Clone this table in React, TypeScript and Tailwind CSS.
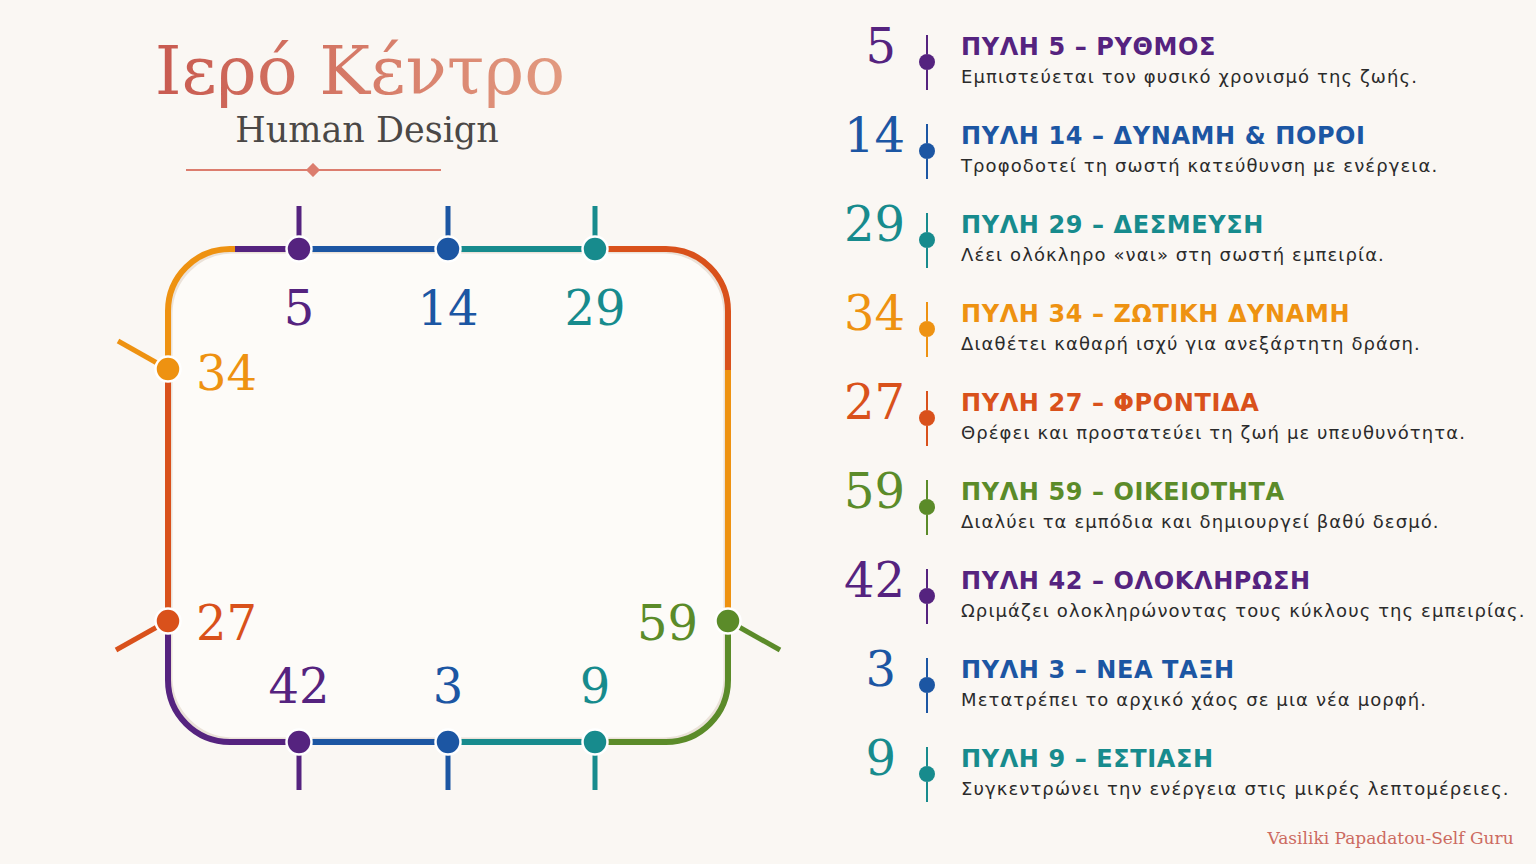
import React from 'react'

const C = {
  purple: '#55237f',
  blue: '#1c56a3',
  teal: '#178b8d',
  orange: '#ee9211',
  red: '#d9511b',
  green: '#5b8b29',
}

const GATES = [
  { n: '5', color: C.purple, title: 'ΠΥΛΗ 5 – ΡΥΘΜΟΣ', text: 'Εμπιστεύεται τον φυσικό χρονισμό της ζωής.' },
  { n: '14', color: C.blue, title: 'ΠΥΛΗ 14 – ΔΥΝΑΜΗ & ΠΟΡΟΙ', text: 'Τροφοδοτεί τη σωστή κατεύθυνση με ενέργεια.' },
  { n: '29', color: C.teal, title: 'ΠΥΛΗ 29 – ΔΕΣΜΕΥΣΗ', text: 'Λέει ολόκληρο «ναι» στη σωστή εμπειρία.' },
  { n: '34', color: C.orange, title: 'ΠΥΛΗ 34 – ΖΩΤΙΚΗ ΔΥΝΑΜΗ', text: 'Διαθέτει καθαρή ισχύ για ανεξάρτητη δράση.' },
  { n: '27', color: C.red, title: 'ΠΥΛΗ 27 – ΦΡΟΝΤΙΔΑ', text: 'Θρέφει και προστατεύει τη ζωή με υπευθυνότητα.' },
  { n: '59', color: C.green, title: 'ΠΥΛΗ 59 – ΟΙΚΕΙΟΤΗΤΑ', text: 'Διαλύει τα εμπόδια και δημιουργεί βαθύ δεσμό.' },
  { n: '42', color: C.purple, title: 'ΠΥΛΗ 42 – ΟΛΟΚΛΗΡΩΣΗ', text: 'Ωριμάζει ολοκληρώνοντας τους κύκλους της εμπειρίας.' },
  { n: '3', color: C.blue, title: 'ΠΥΛΗ 3 – ΝΕΑ ΤΑΞΗ', text: 'Μετατρέπει το αρχικό χάος σε μια νέα μορφή.' },
  { n: '9', color: C.teal, title: 'ΠΥΛΗ 9 – ΕΣΤΙΑΣΗ', text: 'Συγκεντρώνει την ενέργεια στις μικρές λεπτομέρειες.' },
]

// nodes of the centre diagram: [x, y, colour]
const NODES: [number, number, string][] = [
  [299, 249, C.purple],
  [448, 249, C.blue],
  [595, 249, C.teal],
  [168, 369, C.orange],
  [168, 621, C.red],
  [728, 621, C.green],
  [299, 742, C.purple],
  [448, 742, C.blue],
  [595, 742, C.teal],
]

function Diagram() {
  const serif = { fontFamily: '"DejaVu Serif", serif', fontSize: 48 }
  return (
    <svg width={820} height={674} viewBox="0 190 820 674" className="block">
      <path d="M230 249 H666 A62 62 0 0 1 728 311 V680 A62 62 0 0 1 666 742 H230 A62 62 0 0 1 168 680 V311 A62 62 0 0 1 230 249 Z" fill="#fdfbf8" />
      <path d="M232 252 H664 A62 62 0 0 1 725 313 V678 A62 62 0 0 1 664 739 H232 A62 62 0 0 1 171 678 V313 A62 62 0 0 1 232 252 Z" fill="none" stroke="#ebe2d9" strokeWidth={3} />

      <g fill="none" strokeWidth={6}>
        <path d="M235 249 H230 A62 62 0 0 0 168 311 V369" stroke={C.orange} />
        <path d="M168 369 V621" stroke={C.red} />
        <path d="M168 621 V680 A62 62 0 0 0 230 742 H299" stroke={C.purple} />
        <path d="M299 742 H448" stroke={C.blue} />
        <path d="M448 742 H595" stroke={C.teal} />
        <path d="M595 742 H666 A62 62 0 0 0 728 680 V621" stroke={C.green} />
        <path d="M728 621 V370" stroke={C.orange} />
        <path d="M728 370 V311 A62 62 0 0 0 666 249 H595" stroke={C.red} />
        <path d="M235 249 H299" stroke={C.purple} />
        <path d="M299 249 H448" stroke={C.blue} />
        <path d="M448 249 H595" stroke={C.teal} />
      </g>

      <g strokeWidth={5}>
        <line x1={299} y1={206} x2={299} y2={237} stroke={C.purple} />
        <line x1={448} y1={206} x2={448} y2={237} stroke={C.blue} />
        <line x1={595} y1={206} x2={595} y2={237} stroke={C.teal} />
        <line x1={299} y1={755} x2={299} y2={790} stroke={C.purple} />
        <line x1={448} y1={755} x2={448} y2={790} stroke={C.blue} />
        <line x1={595} y1={755} x2={595} y2={790} stroke={C.teal} />
        <line x1={118} y1={341} x2={157} y2={363} stroke={C.orange} />
        <line x1={116} y1={650} x2={157} y2={627} stroke={C.red} />
        <line x1={739} y1={627} x2={780} y2={650} stroke={C.green} />
      </g>

      {NODES.map(([x, y, c]) => (
        <circle key={`${x}-${y}`} cx={x} cy={y} r={12.5} fill={c} stroke="#ffffff" strokeWidth={2.5} />
      ))}

      <g style={serif}>
        <text x={299} y={325} textAnchor="middle" fill={C.purple}>5</text>
        <text x={448} y={325} textAnchor="middle" fill={C.blue}>14</text>
        <text x={595} y={325} textAnchor="middle" fill={C.teal}>29</text>
        <text x={196} y={390} fill={C.orange}>34</text>
        <text x={196} y={640} fill={C.red}>27</text>
        <text x={698} y={640} textAnchor="end" fill={C.green}>59</text>
        <text x={299} y={703} textAnchor="middle" fill={C.purple}>42</text>
        <text x={448} y={703} textAnchor="middle" fill={C.blue}>3</text>
        <text x={595} y={703} textAnchor="middle" fill={C.teal}>9</text>
      </g>
    </svg>
  )
}

function GateRow({ n, color, title, text }: { n: string; color: string; title: string; text: string }) {
  return (
    <div className="flex h-[89px] items-start">
      <div
        className={`w-[85px] mt-[-13px] text-right font-['DejaVu_Serif',serif] text-[48px] leading-none ${n.length === 1 ? 'pr-[9px]' : ''}`}
        style={{ color }}
      >
        {n}
      </div>
      <div className="w-[44px] h-[55px] flex flex-col items-center">
        <div className="w-[2px] h-[19px]" style={{ backgroundColor: color }} />
        <div className="w-[16px] h-[16px] rounded-full" style={{ backgroundColor: color }} />
        <div className="w-[2px] flex-1" style={{ backgroundColor: color }} />
      </div>
      <div className="ml-[12px] flex flex-col font-['DejaVu_Sans',sans-serif]">
        <div className="text-[24px] font-bold leading-none tracking-[0.6px] whitespace-nowrap" style={{ color }}>
          {title}
        </div>
        <div className="mt-[9px] text-[18px] leading-none tracking-[1.1px] text-[#2b2b2b] whitespace-nowrap">{text}</div>
      </div>
    </div>
  )
}

export default function App() {
  return (
    <div className="w-[1536px] h-[864px] bg-[#faf7f3] flex overflow-hidden">
      <div className="w-[820px] flex flex-col">
        <div className="h-[190px] flex flex-col">
          <div className="w-[720px] pt-[37px] text-center font-['DejaVu_Serif',serif]">
            <span className="text-[68px] leading-none bg-linear-to-r from-[#c85a50] to-[#e29a80] bg-clip-text text-transparent">
              Ιερό Κέντρο
            </span>
          </div>
          <div className="w-[720px] pl-[14px] mt-[8px] text-center font-['DejaVu_Serif',serif] text-[35px] leading-none text-[#4b4846]">
            Human Design
          </div>
          <svg width={260} height={14} className="block ml-[185px] mt-[15px]">
            <line x1={1} y1={7} x2={256} y2={7} stroke="#dc7d6e" strokeWidth={2} />
            <rect x={123} y={2} width={10} height={10} fill="#dc7d6e" transform="rotate(45 128 7)" />
          </svg>
        </div>
        <Diagram />
      </div>

      <div className="flex-1 flex flex-col pt-[35px] pr-[23px]">
        {GATES.map((g) => (
          <GateRow key={g.n} {...g} />
        ))}
        <div className="mt-[-6px] mr-[12px] text-right font-['DejaVu_Serif',serif] text-[17px] leading-none text-[#cc6a60]">
          Vasiliki Papadatou-Self Guru
        </div>
      </div>
    </div>
  )
}
